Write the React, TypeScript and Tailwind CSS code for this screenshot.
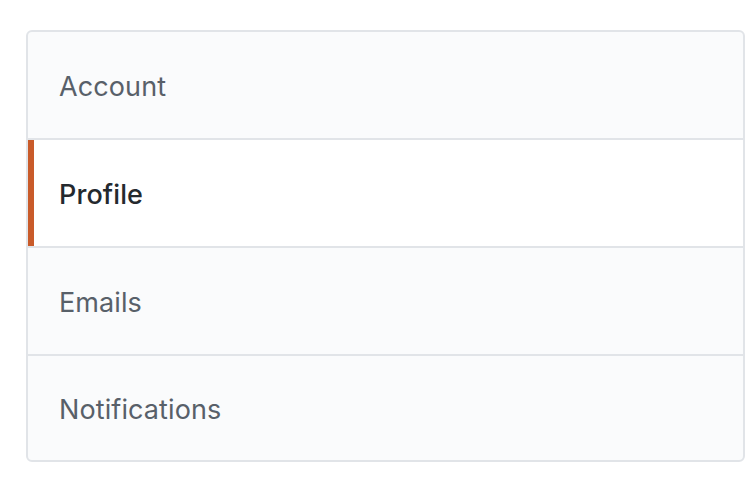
import React from "react";

const items = [
  { label: "Account", selected: false, h: "h-[106px]" },
  { label: "Profile", selected: true, h: "h-[106px]" },
  { label: "Emails", selected: false, h: "h-[106px]" },
  { label: "Notifications", selected: false, h: "h-[104px]" },
];

export default function App() {
  return (
    <div
      className="w-[756px] h-[480px] bg-white pt-[30px] pl-[26px]"
      style={{ fontFamily: 'Inter, "Liberation Sans", sans-serif' }}
    >
      <nav className="w-[719px] border-2 border-[#e1e4e8] rounded-[6px] bg-[#fafbfc] overflow-hidden flex flex-col">
        {items.map((it, i) => (
          <div
            key={it.label}
            className={
              (it.selected ? "bg-white " : "") +
              (i < items.length - 1 ? "border-b-2 border-[#e1e4e8] " : "") +
              "flex items-stretch"
            }
          >
            <div className={(it.selected ? "bg-[#c95b2a] " : "") + "w-[6px] shrink-0 " + it.h} />
            <div
              className={
                "flex items-center pl-[25px] pt-[4px] text-[27px] tracking-[0.1px] " +
                it.h +
                (it.selected ? " text-[#24292e] font-medium" : " text-[#586069]")
              }
            >
              {it.label}
            </div>
          </div>
        ))}
      </nav>
    </div>
  );
}
